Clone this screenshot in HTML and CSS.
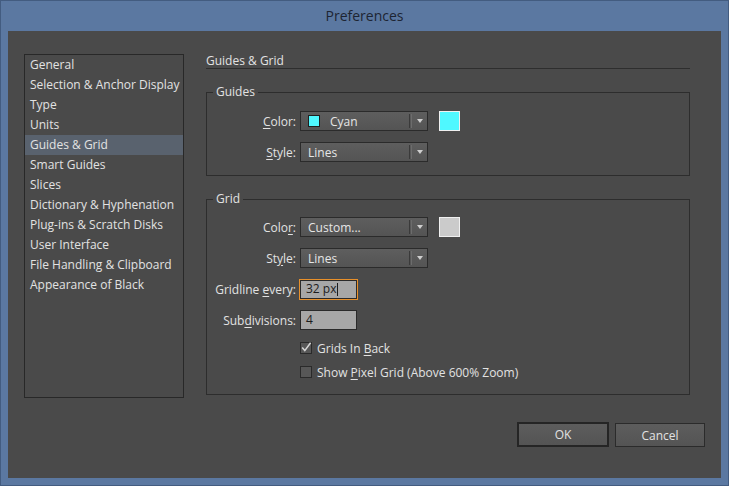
FILE: index.html
```html
<!DOCTYPE html>
<html>
<head>
<meta charset="utf-8">
<title>Preferences</title>
<link rel="stylesheet" href="styles.css">
</head>
<body>
<div class="window">
  <div class="titlebar">Preferences</div>
  <div class="client">
    <div class="main">
      <ul class="nav">
        <li>General</li>
        <li>Selection &amp; Anchor Display</li>
        <li>Type</li>
        <li>Units</li>
        <li class="selected">Guides &amp; Grid</li>
        <li>Smart Guides</li>
        <li>Slices</li>
        <li>Dictionary &amp; Hyphenation</li>
        <li>Plug-ins &amp; Scratch Disks</li>
        <li>User Interface</li>
        <li>File Handling &amp; Clipboard</li>
        <li>Appearance of Black</li>
      </ul>
      <div class="panel">
        <div class="panel-title">Guides &amp; Grid</div>

        <div class="group guides">
          <div class="group-title">Guides</div>
          <div class="form">
            <label class="lbl"><u>C</u>olor:</label>
            <div class="dd">
              <span class="chip"></span>
              <span class="dd-text">Cyan</span>
              <span class="dd-sep"></span>
              <span class="dd-arrow"><span class="tri"></span></span>
            </div>
            <div class="swatch cyan"></div>

            <label class="lbl"><u>S</u>tyle:</label>
            <div class="dd">
              <span class="dd-text">Lines</span>
              <span class="dd-sep"></span>
              <span class="dd-arrow"><span class="tri"></span></span>
            </div>
          </div>
        </div>

        <div class="group grid">
          <div class="group-title">Grid</div>
          <div class="form">
            <label class="lbl">Colo<u>r</u>:</label>
            <div class="dd">
              <span class="dd-text">Custom...</span>
              <span class="dd-sep"></span>
              <span class="dd-arrow"><span class="tri"></span></span>
            </div>
            <div class="swatch gray"></div>

            <label class="lbl">St<u>y</u>le:</label>
            <div class="dd">
              <span class="dd-text">Lines</span>
              <span class="dd-sep"></span>
              <span class="dd-arrow"><span class="tri"></span></span>
            </div>

            <label class="lbl">Gridline <u>e</u>very:</label>
            <div class="field focused">32 px<span class="caret"></span></div>

            <label class="lbl">Sub<u>d</u>ivisions:</label>
            <div class="field">4</div>

            <div class="checks">
              <div class="check-row">
                <span class="cb"><svg width="12" height="12" viewBox="0 0 12 12"><path d="M2.2 5.6 L4.8 8.6 L10.6 0.8" fill="none" stroke="#d6d6d6" stroke-width="1.5"/></svg></span>
                <span>Grids In <u>B</u>ack</span>
              </div>
              <div class="check-row">
                <span class="cb"></span>
                <span>Show <u>P</u>ixel Grid (Above 600% Zoom)</span>
              </div>
            </div>
          </div>
        </div>
      </div>
    </div>
    <div class="footer">
      <button class="btn ok">OK</button>
      <button class="btn cancel">Cancel</button>
    </div>
  </div>
</div>
</body>
</html>
```
FILE: styles.css
```css
* { box-sizing: border-box; }
html, body { margin: 0; padding: 0; }
body {
  width: 729px;
  height: 486px;
  overflow: hidden;
  background: #5a77a0;
  font-family: "Open Sans", "Segoe UI", sans-serif;
  font-size: 12px;
  color: #e2e2e2;
}
u { text-decoration: underline; text-underline-offset: 2px; }

.window {
  width: 729px;
  height: 486px;
  border: 1px solid #435c80;
  background: #5b78a1;
  padding: 0 7px 7px 7px;
  display: flex;
  flex-direction: column;
}
.titlebar {
  flex: none;
  height: 30px;
  line-height: 30px;
  text-align: center;
  font-size: 14px;
  color: #1d2533;
}
.client {
  flex: 1;
  background: #4a4a4a;
  padding: 23px 16px 0 16px;
}
.main {
  display: flex;
  gap: 22px;
  height: 344px;
}
.nav {
  flex: none;
  width: 160px;
  height: 344px;
  margin: 0;
  padding: 0;
  list-style: none;
  border: 1px solid #282828;
}
.nav li {
  height: 20px;
  line-height: 20px;
  padding-left: 5px;
  white-space: nowrap;
}
.nav li.selected { background: #59626e; }

.panel { width: 484px; }
.panel-title {
  height: 15px;
  line-height: 13px;
  border-bottom: 1px solid #2e2e2e;
}
.group {
  border: 1px solid #2d2d2d;
  margin-top: 23px;
}
.group.guides { padding-bottom: 13px; }
.group.grid { margin-top: 23px; padding-bottom: 15px; }
.group-title {
  width: fit-content;
  height: 14px;
  line-height: 14px;
  margin: -8px 0 0 6px;
  padding: 0 3px;
  background: #4a4a4a;
}
.form {
  margin-top: 12px;
  display: grid;
  grid-template-columns: 93px 128px 32px;
  grid-template-rows: repeat(4, 20px);
  grid-auto-rows: auto;
  row-gap: 11px;
  align-items: center;
}
.guides .form { grid-template-rows: repeat(2, 20px); }
.grid .form { margin-top: 11px; }
.lbl {
  grid-column: 1;
  text-align: right;
  padding-right: 4px;
  white-space: nowrap;
}
.dd {
  height: 20px;
  border: 1px solid #2b2b2b;
  background: linear-gradient(#5e5e5e, #545454);
  display: flex;
  align-items: center;
  padding-left: 7px;
  color: #e6e6e6;
}
.chip {
  width: 12px;
  height: 12px;
  border: 1px solid #202020;
  background: #4ff8ff;
  margin-right: 10px;
}
.dd-text { flex: 1; white-space: nowrap; }
.dd-sep {
  width: 3px;
  height: 14px;
  border-left: 1px solid #3a3a3a;
  border-right: 1px solid #6c6c6c;
}
.dd-arrow {
  width: 15px;
  height: 18px;
  display: flex;
  align-items: center;
  justify-content: center;
}
.tri {
  width: 0;
  height: 0;
  border-left: 3px solid transparent;
  border-right: 3px solid transparent;
  border-top: 4px solid #cfcfcf;
}
.swatch {
  justify-self: end;
  width: 21px;
  height: 20px;
  border: 1px solid #f0f0f0;
}
.swatch.cyan { background: #4ff8ff; }
.swatch.gray { background: #cbcbcb; }

.field {
  grid-column: 2;
  width: 57px;
  height: 20px;
  border: 1px solid #2a2a2a;
  background: #a7a7a7;
  color: #1c1c1c;
  padding-left: 5px;
  line-height: 18px;
  display: flex;
  align-items: center;
}
.field.focused {
  height: 19px;
  outline: 1px solid #e8902a;
}
.caret {
  width: 1px;
  height: 13px;
  background: #1c1c1c;
  margin-left: 1px;
}
.checks {
  grid-column: 2 / -1;
  align-self: start;
  display: flex;
  flex-direction: column;
  gap: 10px;
}
.check-row {
  height: 14px;
  display: flex;
  align-items: center;
  gap: 5px;
  white-space: nowrap;
}
.cb {
  flex: none;
  width: 12px;
  height: 12px;
  border: 1px solid #2a2a2a;
  background: #575757;
  position: relative;
}
.cb svg {
  position: absolute;
  left: -1px;
  top: -1px;
}

.footer {
  display: flex;
  justify-content: flex-end;
  gap: 6px;
  margin-top: 24px;
}
.btn {
  height: 25px;
  font: inherit;
  color: #e2e2e2;
  background: linear-gradient(#5d5d5d, #545454);
  border: 1px solid #2b2b2b;
  padding: 0;
  margin: 0;
}
.btn.ok { width: 92px; border: 2px solid #252525; }
.btn.cancel { width: 90px; height: 24px; margin-top: 1px; }
```
